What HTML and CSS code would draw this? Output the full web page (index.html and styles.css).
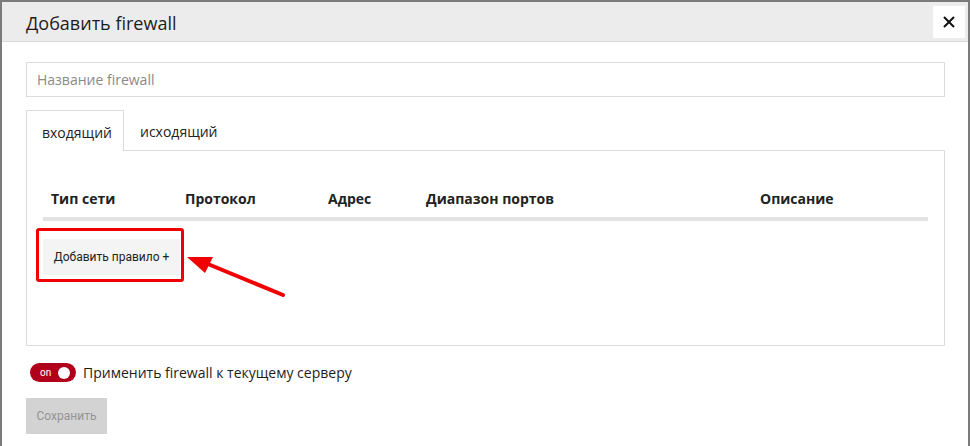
FILE: index.html
```html
<!DOCTYPE html>
<html lang="ru">
<head>
<meta charset="utf-8">
<title>Добавить firewall</title>
<link rel="stylesheet" href="styles.css">
</head>
<body>
<div class="modal">
  <div class="modal-header">
    <h1 class="modal-title">Добавить firewall</h1>
    <button class="close-btn" type="button" aria-label="Закрыть">
      <svg width="12" height="12" viewBox="0 0 12 12"><path d="M1 1L11 11M11 1L1 11" stroke="#111" stroke-width="2"/></svg>
    </button>
  </div>
  <div class="modal-body">
    <input class="name-input" type="text" placeholder="Название firewall">
    <div class="tabs">
      <div class="tab active">входящий</div>
      <div class="tab">исходящий</div>
    </div>
    <div class="tab-panel">
      <div class="table-head">
        <div class="th">Тип сети</div>
        <div class="th">Протокол</div>
        <div class="th">Адрес</div>
        <div class="th">Диапазон портов</div>
        <div class="th">Описание</div>
      </div>
      <button class="add-rule" type="button">Добавить правило +</button>
      <div class="highlight"></div>
    </div>
    <div class="toggle-row">
      <div class="toggle"><span class="toggle-text">on</span><span class="knob"></span></div>
      <span class="toggle-label">Применить firewall к текущему серверу</span>
    </div>
    <button class="save-btn" type="button">Сохранить</button>
  </div>
</div>
<svg class="arrow" width="970" height="446" viewBox="0 0 970 446">
  <line x1="283" y1="295" x2="203" y2="262" stroke="#f00000" stroke-width="4" stroke-linecap="round"/>
  <polygon points="187,257 213,257 205,273" fill="#f00000"/>
</svg>
</body>
</html>
```

FILE: styles.css
```css
* { box-sizing: border-box; }
html, body { margin: 0; padding: 0; }
body {
  background: #7b7b7b;
  width: 970px;
  height: 446px;
  overflow: hidden;
  font-family: "Open Sans", "Noto Sans", sans-serif;
  color: #222;
  position: relative;
  padding: 2px 2px 0 2px;
}
.modal {
  background: #fff;
  height: 444px;
  display: flex;
  flex-direction: column;
}
.modal-header {
  height: 40px;
  background: #ececec;
  border-bottom: 1px solid #dadada;
  display: flex;
  align-items: center;
  justify-content: space-between;
  padding: 0 3px 0 24px;
}
.modal-title {
  margin: 0;
  font-size: 18px;
  font-weight: 400;
  color: #1d1d1d;
  position: relative;
  top: 1px;
}
.close-btn {
  width: 32px;
  height: 32px;
  border: 0;
  background: #fff;
  padding: 0;
  display: flex;
  align-items: center;
  justify-content: center;
  align-self: flex-start;
  margin-top: 4px;
}
.modal-body {
  padding: 20px 23px 0 24px;
  display: flex;
  flex-direction: column;
}
.name-input {
  width: 100%;
  height: 35px;
  border: 1px solid #dcdcdc;
  padding: 0 10px;
  font-family: inherit;
  font-size: 14px;
  color: #333;
  outline: none;
}
.name-input::placeholder { color: #8a8a8a; }
.tabs {
  display: flex;
  margin-top: 13px;
  position: relative;
  z-index: 1;
}
.tab {
  height: 41px;
  padding: 0 15px;
  display: flex;
  align-items: center;
  font-size: 14px;
  color: #222;
  border: 1px solid transparent;
  border-bottom: 0;
}
.tab.active {
  width: 98px;
  border-color: #dcdcdc;
  background: #fff;
  padding-top: 2px;
}
.tab-panel {
  border: 1px solid #dcdcdc;
  margin-top: -1px;
  height: 196px;
  padding: 0 16px;
  position: relative;
}
.table-head {
  display: grid;
  grid-template-columns: 134px 143px 98px 334px 1fr;
  margin-top: 33px;
  border-bottom: 4px solid #e2e2e2;
  height: 37px;
}
.th {
  padding-left: 8px;
  font-size: 14px;
  font-weight: 700;
  color: #222;
  line-height: 30px;
}
.add-rule {
  margin-top: 18px;
  width: 137px;
  height: 36px;
  border: 0;
  background: #f4f4f4;
  font-family: Roboto, "Liberation Sans", sans-serif;
  font-size: 12px;
  color: #222;
  padding: 0;
}
.highlight {
  position: absolute;
  left: 9px;
  top: 77px;
  width: 148px;
  height: 54px;
  border: 3px solid #f00000;
  border-radius: 3px;
}
.toggle-row {
  display: flex;
  align-items: center;
  margin-top: 17px;
  padding-left: 4px;
  gap: 7px;
}
.toggle {
  width: 46px;
  height: 19px;
  border-radius: 10px;
  background: #b1001c;
  display: flex;
  align-items: center;
  justify-content: space-between;
  padding: 0 6px 0 10px;
}
.toggle-text {
  color: #fff;
  font-family: Roboto, "Liberation Sans", sans-serif;
  font-size: 10px;
}
.knob {
  width: 12px;
  height: 12px;
  border-radius: 50%;
  background: #fff;
}
.toggle-label {
  font-size: 14px;
  color: #1d1d1d;
}
.save-btn {
  margin-top: 16px;
  width: 81px;
  height: 36px;
  border: 0;
  background: #d3d3d3;
  color: #939393;
  font-family: Roboto, "Liberation Sans", sans-serif;
  font-size: 12px;
  padding: 0;
}
.arrow {
  position: absolute;
  left: 0;
  top: 0;
  pointer-events: none;
}
```
